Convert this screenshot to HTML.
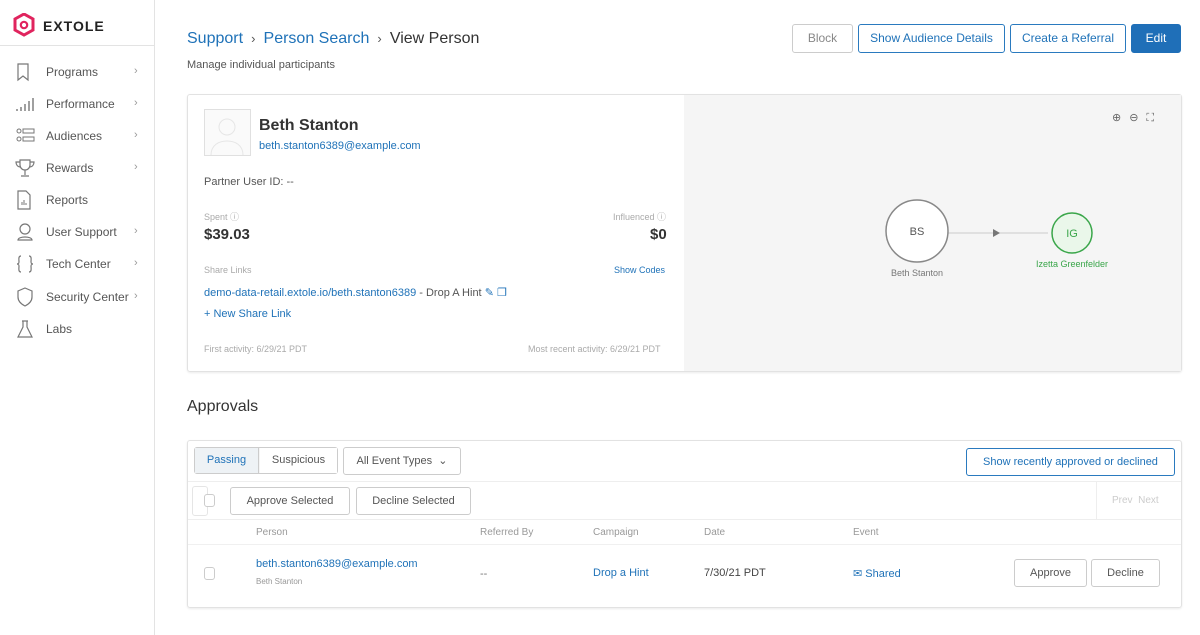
<!DOCTYPE html>
<html><head><style>
*{box-sizing:border-box;margin:0;padding:0}
body{width:1200px;height:635px;overflow:hidden;background:#fff;font-family:"Liberation Sans",Arial,sans-serif;color:#333;position:relative}
.a{position:absolute}
.blue{color:#1f72b8}
.side{left:0;top:0;width:155px;height:635px;border-right:1px solid #e3e3e3}
.nav{position:absolute;left:0;width:155px;height:32px;font-size:12px;color:#555}
.nav span{position:absolute;left:46px;top:9px}
.nav i{position:absolute;left:134px;top:9px;font-style:normal;color:#999;font-size:11px}
.nav svg{position:absolute;left:15px;top:6px}
.btn{position:absolute;height:29px;border:1px solid #2a7abf;border-radius:3px;font-size:12px;color:#1f72b8;text-align:center;line-height:27px;background:#fff}
.gb{position:absolute;border:1px solid #ccc;border-radius:3px;font-size:12px;color:#555;text-align:center;background:#fff}
.sm{font-size:10px;color:#aaa}
</style></head><body>
<div class="a side">
 <div class="a" style="left:0;top:45px;width:155px;border-top:1px solid #e3e3e3"></div>
 <svg class="a" style="left:13px;top:13px" width="22" height="24" viewBox="0 0 22 24"><path d="M11 1 L20 6 L20 17 L11 22 L2 17 L2 6 Z" fill="none" stroke="#e0245e" stroke-width="3"/><circle cx="11" cy="12" r="3.2" fill="none" stroke="#e0245e" stroke-width="2.2"/></svg>
 <div class="a" style="left:43px;top:18px;font-size:14px;font-weight:bold;letter-spacing:1px;color:#222">EXTOLE</div>
 <div class="nav" style="top:56px"><svg width="16" height="20"><path d="M3 2h10v16l-5-4-5 4z" fill="none" stroke="#777" stroke-width="1.2"/></svg><span>Programs</span><i>›</i></div>
 <div class="nav" style="top:88px"><svg width="20" height="20"><path d="M2 17v-2M6 17v-4M10 17v-7M14 17v-10M18 17v-13" stroke="#777" stroke-width="1.4"/></svg><span>Performance</span><i>›</i></div>
 <div class="nav" style="top:120px"><svg width="22" height="20"><circle cx="4" cy="5" r="2" fill="none" stroke="#777"/><circle cx="4" cy="13" r="2" fill="none" stroke="#777"/><rect x="8" y="3" width="11" height="4" fill="none" stroke="#777"/><rect x="8" y="11" width="11" height="4" fill="none" stroke="#777"/></svg><span>Audiences</span><i>›</i></div>
 <div class="nav" style="top:152px"><svg width="20" height="20"><path d="M5 2h10v5a5 5 0 0 1-10 0zM5 4H1c0 3 2 5 4 5M15 4h4c0 3-2 5-4 5M10 12v5M6 18h8" fill="none" stroke="#777" stroke-width="1.2"/></svg><span>Rewards</span><i>›</i></div>
 <div class="nav" style="top:184px"><svg width="18" height="20"><path d="M3 1h8l4 4v14H3z" fill="none" stroke="#777" stroke-width="1.2"/><path d="M7 15v-3M9 15v-5M11 15v-2" stroke="#777"/></svg><span>Reports</span></div>
 <div class="nav" style="top:216px"><svg width="20" height="20"><circle cx="10" cy="7" r="5" fill="none" stroke="#777" stroke-width="1.2"/><path d="M3 18c0-4 14-4 14 0z" fill="none" stroke="#777" stroke-width="1.2"/></svg><span>User Support</span><i>›</i></div>
 <div class="nav" style="top:248px"><svg width="20" height="20"><path d="M6 2c-3 0-2 4-2 6s-2 2-2 2 2 0 2 2-1 6 2 6M14 2c3 0 2 4 2 6s2 2 2 2-2 0-2 2 1 6-2 6" fill="none" stroke="#777" stroke-width="1.2"/></svg><span>Tech Center</span><i>›</i></div>
 <div class="nav" style="top:281px"><svg width="20" height="20"><path d="M10 1l7 3v6c0 4-3 7-7 9-4-2-7-5-7-9V4z" fill="none" stroke="#777" stroke-width="1.2"/></svg><span>Security Center</span><i>›</i></div>
 <div class="nav" style="top:313px"><svg width="20" height="20"><path d="M7 2h6M8 2v6l-5 10h14l-5-10V2" fill="none" stroke="#777" stroke-width="1.2"/></svg><span>Labs</span></div>
</div>

<div class="a" style="left:187px;top:30px;font-size:16px"><span class="blue">Support</span> <span style="color:#555;font-size:13px">&nbsp;›&nbsp;</span> <span class="blue">Person Search</span> <span style="color:#555;font-size:13px">&nbsp;›&nbsp;</span> <span>View Person</span></div>
<div class="a" style="left:187px;top:59px;font-size:11px;color:#555">Manage individual participants</div>
<div class="gb" style="left:792px;top:24px;width:61px;height:29px;line-height:27px;color:#888">Block</div>
<div class="btn" style="left:858px;top:24px;width:147px">Show Audience Details</div>
<div class="btn" style="left:1010px;top:24px;width:116px">Create a Referral</div>
<div class="btn" style="left:1131px;top:24px;width:50px;background:#1f6fb8;color:#fff;border-color:#1f6fb8">Edit</div>

<div class="a" style="left:187px;top:94px;width:995px;height:278px;border:1px solid #e2e2e2;border-radius:3px;box-shadow:0 1px 2px rgba(0,0,0,.08)">
 <div class="a" style="left:496px;top:0;width:497px;height:276px;background:#f5f5f5"></div>
 <div class="a" style="left:16px;top:14px;width:47px;height:47px;border:1px solid #e0e0e0;background:#fafafa"><svg width="45" height="45"><circle cx="22" cy="17" r="8" fill="none" stroke="#e6e6e6"/><path d="M6 45c0-10 8-14 16-14s16 4 16 14" fill="none" stroke="#e6e6e6"/></svg></div>
 <div class="a" style="left:71px;top:22px;font-size:16px;font-weight:bold;color:#333">Beth Stanton</div>
 <div class="a blue" style="left:71px;top:45px;font-size:11px">beth.stanton6389@example.com</div>
 <div class="a" style="left:16px;top:81px;font-size:11px;color:#555">Partner User ID: --</div>
 <div class="a sm" style="left:16px;top:115px;font-size:9px">Spent ⓘ</div>
 <div class="a" style="left:16px;top:131px;font-size:15px;font-weight:bold">$39.03</div>
 <div class="a sm" style="left:425px;top:115px;font-size:9px">Influenced ⓘ</div>
 <div class="a" style="left:462px;top:131px;font-size:15px;font-weight:bold">$0</div>
 <div class="a sm" style="left:16px;top:170px;font-size:9px">Share Links</div>
 <div class="a blue" style="left:426px;top:170px;font-size:9px">Show Codes</div>
 <div class="a" style="left:16px;top:191px;font-size:11px;color:#555"><span class="blue">demo-data-retail.extole.io/beth.stanton6389</span> - Drop A Hint <span class="blue">✎ ❐</span></div>
 <div class="a blue" style="left:16px;top:213px;font-size:11px">+ New Share Link</div>
 <div class="a sm" style="left:16px;top:249px;font-size:9px">First activity: 6/29/21 PDT</div>
 <div class="a sm" style="left:340px;top:249px;font-size:9px">Most recent activity: 6/29/21 PDT</div>
 <div class="a" style="left:924px;top:16px;font-size:11px;color:#666;letter-spacing:8px">⊕⊖⛶</div>
 <svg class="a" style="left:690px;top:100px" width="230" height="90"><line x1="62" y1="38" x2="170" y2="38" stroke="#ccc"/><path d="M115 34l7 4-7 4z" fill="#777"/><circle cx="39" cy="36" r="31" fill="#fff" stroke="#888" stroke-width="1.5"/><text x="39" y="40" font-size="11" fill="#555" text-anchor="middle" font-family="Liberation Sans">BS</text><text x="39" y="81" font-size="9" fill="#777" text-anchor="middle" font-family="Liberation Sans">Beth Stanton</text><circle cx="194" cy="38" r="20" fill="#eaf7ea" stroke="#3aa64a" stroke-width="1.5"/><text x="194" y="42" font-size="11" fill="#3aa64a" text-anchor="middle" font-family="Liberation Sans">IG</text><text x="194" y="72" font-size="9" fill="#3aa64a" text-anchor="middle" font-family="Liberation Sans">Izetta Greenfelder</text></svg>
</div>

<div class="a" style="left:187px;top:398px;font-size:16px;color:#333">Approvals</div>
<div class="a" style="left:187px;top:440px;width:995px;height:168px;border:1px solid #e2e2e2;border-radius:3px;box-shadow:0 1px 2px rgba(0,0,0,.08)">
 <div class="gb" style="left:6px;top:6px;width:144px;height:27px;background:#f5f5f5"></div>
 <div class="a" style="left:7px;top:7px;width:64px;height:25px;border-right:1px solid #ccc;background:#eef2f5;font-size:11px;color:#1f72b8;text-align:center;line-height:25px">Passing</div>
 <div class="a" style="left:72px;top:7px;width:77px;height:25px;font-size:11px;color:#555;text-align:center;line-height:25px;background:#fff">Suspicious</div>
 <div class="gb" style="left:155px;top:6px;width:118px;height:28px;line-height:26px;font-size:11px">All Event Types &nbsp;⌄</div>
 <div class="btn" style="left:778px;top:7px;width:209px;height:28px;line-height:26px;font-size:11px">Show recently approved or declined</div>
 <div class="a" style="left:0;top:40px;width:993px;border-top:1px solid #eee"></div>
 <div class="a" style="left:908px;top:40px;height:38px;border-left:1px solid #eee"></div>
 <div class="gb" style="left:4px;top:45px;width:16px;height:30px;border-color:#e5e5e5"></div>
 <div class="gb" style="left:16px;top:53px;width:11px;height:13px"></div>
 <div class="gb" style="left:42px;top:46px;width:120px;height:28px;line-height:26px;font-size:11px">Approve Selected</div>
 <div class="gb" style="left:168px;top:46px;width:115px;height:28px;line-height:26px;font-size:11px">Decline Selected</div>
 <div class="a" style="left:924px;top:54px;font-size:10px;color:#ccc">Prev &nbsp;Next</div>
 <div class="a" style="left:0;top:78px;width:993px;border-top:1px solid #eee"></div>
 <div class="a" style="top:86px;left:68px;font-size:10px;color:#999">Person</div>
 <div class="a" style="top:86px;left:292px;font-size:10px;color:#999">Referred By</div>
 <div class="a" style="top:86px;left:405px;font-size:10px;color:#999">Campaign</div>
 <div class="a" style="top:86px;left:516px;font-size:10px;color:#999">Date</div>
 <div class="a" style="top:86px;left:665px;font-size:10px;color:#999">Event</div>
 <div class="a" style="left:0;top:103px;width:993px;border-top:1px solid #f0f0f0"></div>
 <div class="gb" style="left:16px;top:126px;width:11px;height:13px"></div>
 <div class="a blue" style="left:68px;top:117px;font-size:11px">beth.stanton6389@example.com</div>
 <div class="a" style="left:68px;top:136px;font-size:8px;color:#999">Beth Stanton</div>
 <div class="a" style="left:292px;top:127px;font-size:11px;color:#777">--</div>
 <div class="a blue" style="left:405px;top:126px;font-size:11px">Drop a Hint</div>
 <div class="a" style="left:516px;top:126px;font-size:11px;color:#444">7/30/21 PDT</div>
 <div class="a blue" style="left:665px;top:126px;font-size:11px">✉ Shared</div>
 <div class="gb" style="left:826px;top:118px;width:73px;height:28px;line-height:26px;font-size:11px">Approve</div>
 <div class="gb" style="left:903px;top:118px;width:69px;height:28px;line-height:26px;font-size:11px">Decline</div>
</div>
</body></html>
